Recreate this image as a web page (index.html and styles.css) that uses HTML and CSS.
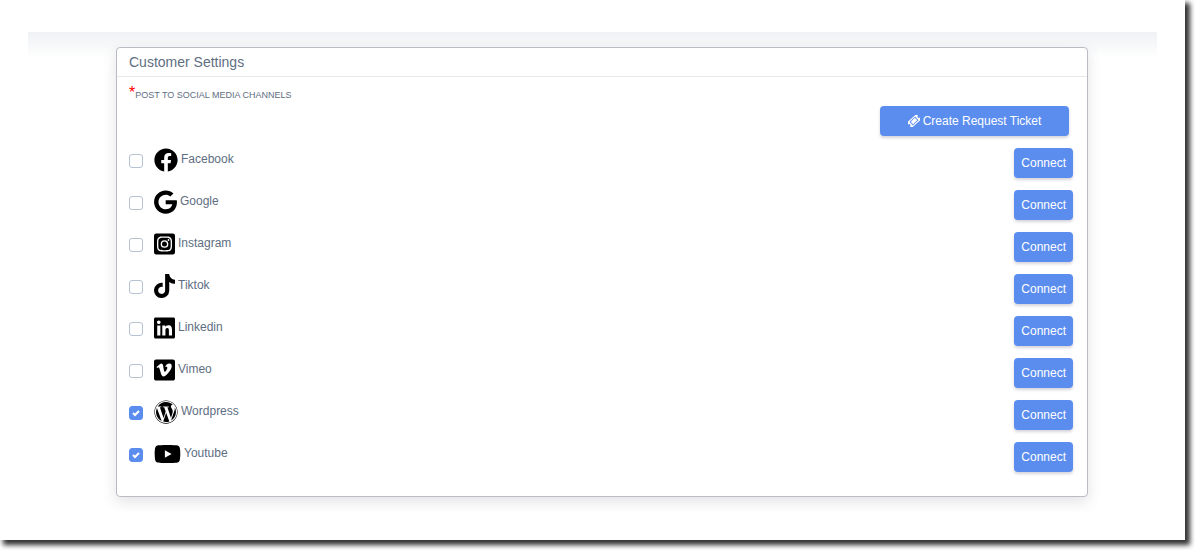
FILE: index.html
```html
<!DOCTYPE html>
<html lang="en">
<head>
    <meta charset="UTF-8">
    <meta name="viewport" content="width=device-width, initial-scale=1.0">
    <title>Customer Settings</title>
    <link rel="stylesheet" href="styles.css">
</head>
<body>
    <main class="sheet">
        <div class="content">
            <form class="card">
                <h1 class="card-header">Customer Settings</h1>
                <div class="card-body">
                    <p class="section-title"><span class="required">*</span>POST TO SOCIAL MEDIA CHANNELS</p>
                    <div class="actions">
                        <button type="button" class="btn btn-ticket">
                            <svg class="ticket-icon" viewBox="0 0 512 512" aria-hidden="true"><g transform="rotate(-42 256 256)"><path fill-rule="evenodd" d="M10 104h492a36 36 0 0 1 36 36v56a60 60 0 0 0 0 120v56a36 36 0 0 1-36 36H10a36 36 0 0 1-36-36v-56a60 60 0 0 0 0-120v-56a36 36 0 0 1 36-36zM92 148v216h328V148zM136 184h240v144H136z"/></g></svg>
                            Create Request Ticket
                        </button>
                    </div>
                    <ul class="channels">
                        <li class="channel">
                            <input type="checkbox" id="facebook">
                            <label for="facebook">
                                <svg class="icon" width="24" height="24" viewBox="0 0 512 512" aria-hidden="true"><path d="M504 256C504 119 393 8 256 8S8 119 8 256c0 123.78 90.69 226.38 209.25 245V327.69h-63V256h63v-54.64c0-62.15 37-96.48 93.67-96.48 27.14 0 55.52 4.84 55.52 4.84v61h-31.28c-30.8 0-40.41 19.12-40.41 38.73V256h68.78l-11 71.69h-57.78V501C413.31 482.38 504 379.78 504 256z"/></svg>
                                <span>Facebook</span>
                            </label>
                            <button type="button" class="btn">Connect</button>
                        </li>
                        <li class="channel">
                            <input type="checkbox" id="google">
                            <label for="google">
                                <svg class="icon" width="23" height="24" viewBox="0 0 488 512" aria-hidden="true"><path d="M488 261.8C488 403.3 391.1 504 248 504 110.8 504 0 393.2 0 256S110.8 8 248 8c66.8 0 123 24.5 166.3 64.9l-67.5 64.9C258.5 52.6 94.3 116.6 94.3 256c0 86.5 69.1 156.6 153.7 156.6 98.2 0 135-70.4 140.8-106.9H248v-85.3h236.1c2.3 12.7 3.9 24.9 3.9 41.4z"/></svg>
                                <span>Google</span>
                            </label>
                            <button type="button" class="btn">Connect</button>
                        </li>
                        <li class="channel">
                            <input type="checkbox" id="instagram">
                            <label for="instagram">
                                <svg class="icon" width="21" height="24" viewBox="0 0 448 512" aria-hidden="true"><path d="M224 202.66A53.34 53.34 0 1 0 277.36 256 53.38 53.38 0 0 0 224 202.66zm124.71-41a54 54 0 0 0-30.41-30.41c-21-8.29-71-6.43-94.3-6.43s-73.25-1.93-94.31 6.43a54 54 0 0 0-30.41 30.41c-8.28 21-6.43 71.05-6.43 94.33s-1.85 73.27 6.47 94.34a54 54 0 0 0 30.41 30.41c21 8.29 71 6.43 94.31 6.43s73.24 1.93 94.3-6.43a54 54 0 0 0 30.41-30.41c8.35-21 6.43-71.05 6.43-94.33s1.92-73.26-6.43-94.33zM224 338a82 82 0 1 1 82-82 81.9 81.9 0 0 1-82 82zm85.38-148.3a19.14 19.14 0 1 1 19.13-19.14 19.1 19.1 0 0 1-19.09 19.18zM400 32H48A48 48 0 0 0 0 80v352a48 48 0 0 0 48 48h352a48 48 0 0 0 48-48V80a48 48 0 0 0-48-48zm-17.12 290c-1.29 25.63-7.14 48.34-25.85 67s-41.4 24.63-67 25.85c-26.41 1.49-105.59 1.49-132 0-25.63-1.29-48.26-7.15-67-25.85s-24.63-41.42-25.85-67c-1.49-26.42-1.49-105.61 0-132 1.29-25.63 7.07-48.34 25.85-67s41.47-24.56 67-25.78c26.41-1.49 105.59-1.49 132 0 25.63 1.29 48.33 7.15 67 25.85s24.63 41.42 25.85 67.05c1.49 26.32 1.49 105.44 0 131.88z"/></svg>
                                <span>Instagram</span>
                            </label>
                            <button type="button" class="btn">Connect</button>
                        </li>
                        <li class="channel">
                            <input type="checkbox" id="tiktok">
                            <label for="tiktok">
                                <svg class="icon" width="21" height="24" viewBox="0 0 448 512" aria-hidden="true"><path d="M448 209.91a210.06 210.06 0 0 1-122.77-39.25v178.72A162.55 162.55 0 1 1 185 188.31v89.89a74.62 74.62 0 1 0 52.23 71.18V0h88a121.18 121.18 0 0 0 1.86 22.17A122.18 122.18 0 0 0 381 102.39a121.43 121.43 0 0 0 67 20.14z"/></svg>
                                <span>Tiktok</span>
                            </label>
                            <button type="button" class="btn">Connect</button>
                        </li>
                        <li class="channel">
                            <input type="checkbox" id="linkedin">
                            <label for="linkedin">
                                <svg class="icon" width="21" height="24" viewBox="0 0 448 512" aria-hidden="true"><path d="M416 32H31.9C14.3 32 0 46.5 0 64.3v383.4C0 465.5 14.3 480 31.9 480H416c17.6 0 32-14.5 32-32.3V64.3c0-17.8-14.4-32.3-32-32.3zM135.4 416H69V202.2h66.5V416zm-33.2-243c-21.3 0-38.5-17.3-38.5-38.5S80.9 96 102.2 96c21.2 0 38.5 17.3 38.5 38.5 0 21.3-17.2 38.5-38.5 38.5zm282.1 243h-66.4V312c0-24.8-.5-56.7-34.5-56.7-34.6 0-39.9 27-39.9 54.9V416h-66.4V202.2h63.7v29.2h.9c8.9-16.8 30.6-34.5 62.9-34.5 67.2 0 79.7 44.3 79.7 101.9V416z"/></svg>
                                <span>Linkedin</span>
                            </label>
                            <button type="button" class="btn">Connect</button>
                        </li>
                        <li class="channel">
                            <input type="checkbox" id="vimeo">
                            <label for="vimeo">
                                <svg class="icon" width="21" height="24" viewBox="0 0 448 512" aria-hidden="true"><path d="M403.2 32H44.8C20.1 32 0 52.1 0 76.8v358.4C0 459.9 20.1 480 44.8 480h358.4c24.7 0 44.8-20.1 44.8-44.8V76.8c0-24.7-20.1-44.8-44.8-44.8zM377 180.8c-1.4 31.5-23.4 74.7-66 129.4-44 57.2-81.3 85.8-111.7 85.8-18.9 0-34.8-17.4-47.9-52.3-25.5-93.3-36.4-148-57.4-148-2.4 0-10.9 5.1-25.4 15.2l-15.2-19.600c37.300-32.800 72.900-69.200 95.200-71.200 25.200-2.400 40.700 14.800 46.500 51.700 20.700 131.200 29.900 151 67.600 91.600 13.500-21.400 20.800-37.700 21.800-48.900 3.500-33.200-25.900-30.900-45.800-22.400 15.900-52.100 46.300-77.400 91.200-76 33.300.9 49 22.500 47.100 64.700z"/></svg>
                                <span>Vimeo</span>
                            </label>
                            <button type="button" class="btn">Connect</button>
                        </li>
                        <li class="channel">
                            <input type="checkbox" id="wordpress" checked>
                            <label for="wordpress">
                                <svg class="icon" width="24" height="24" viewBox="0 0 512 512" aria-hidden="true"><path d="M61.7 169.4l101.500 278C92.200 413 43.300 340.200 43.300 256c0-30.900 6.600-60.100 18.400-86.600zm337.900 75.900c0-26.300-9.400-44.500-17.500-58.700-10.800-17.500-20.900-32.400-20.900-49.900 0-19.600 14.800-37.800 35.700-37.800.9 0 1.800.1 2.800.2-37.900-34.700-88.300-55.900-143.700-55.900-74.300 0-139.700 38.100-177.800 95.900 5 .2 9.700.3 13.700.3 22.200 0 56.700-2.700 56.700-2.700 11.500-.7 12.800 16.200 1.400 17.500 0 0-11.500 1.300-24.300 2l77.500 230.400L249.800 247l-33.100-90.800c-11.500-.7-22.300-2-22.300-2-11.500-.7-10.100-18.200 1.300-17.500 0 0 35.100 2.700 56 2.700 22.200 0 56.700-2.700 56.700-2.700 11.500-.7 12.800 16.200 1.400 17.500 0 0-11.500 1.300-24.300 2l76.900 228.700 21.200-70.900c9-29.400 16-50.500 16-68.700zm-139.900 29.300l-63.800 185.500c19.100 5.600 39.200 8.700 60.100 8.700 24.800 0 48.500-4.300 70.600-12.100-.6-.9-1.100-1.900-1.500-2.900l-65.400-179.200zm183-120.700c.9 6.800 1.400 14 1.400 21.900 0 21.600-4 45.800-16.200 76.200l-65 187.900C426.200 403 468.700 334.500 468.700 256c0-37-9.400-71.800-26-102.100zM504 256c0 136.800-111.300 248-248 248C119.200 504 8 392.700 8 256 8 119.200 119.200 8 256 8c136.700 0 248 111.200 248 248zm-11.400 0c0-130.500-106.200-236.600-236.600-236.600C125.500 19.400 19.400 125.500 19.400 256S125.600 492.600 256 492.600c130.500 0 236.600-106.100 236.600-236.600z"/></svg>
                                <span>Wordpress</span>
                            </label>
                            <button type="button" class="btn">Connect</button>
                        </li>
                        <li class="channel">
                            <input type="checkbox" id="youtube" checked>
                            <label for="youtube">
                                <svg class="icon" width="27" height="24" viewBox="0 0 576 512" aria-hidden="true"><path d="M549.655 124.083c-6.281-23.650-24.787-42.276-48.284-48.597C458.781 64 288 64 288 64S117.220 64 74.629 75.486c-23.497 6.322-42.003 24.947-48.284 48.597-11.412 42.867-11.412 132.305-11.412 132.305s0 89.438 11.412 132.305c6.281 23.650 24.787 41.500 48.284 47.821C117.220 448 288 448 288 448s170.780 0 213.371-11.486c23.497-6.321 42.003-24.171 48.284-47.821 11.412-42.867 11.412-132.305 11.412-132.305s0-89.438-11.412-132.305zm-317.510 213.508V175.185l142.739 81.205-142.739 81.201z"/></svg>
                                <span>Youtube</span>
                            </label>
                            <button type="button" class="btn">Connect</button>
                        </li>
                    </ul>
                </div>
            </form>
        </div>
    </main>
</body>
</html>
```

FILE: styles.css
```css
* {
    box-sizing: border-box;
}
body {
    margin: 0;
    padding: 0 10px 10px 0;
    background-color: #fff;
    color: #5e6e82;
    font-family: "Liberation Sans", Arial, sans-serif;
    font-size: 12px;
    overflow: hidden;
}
.sheet {
    padding: 32px 28px 28px;
    background-color: #fff;
    box-shadow: 4px 4px 5px 1px #333;
}
.content {
    padding: 15px 69px 15px 88px;
    background: linear-gradient(#eff1f4, #fff 26px);
    overflow: hidden;
}
.card {
    background-color: #fff;
    border: 1px solid #b9bcc2;
    border-radius: 4px;
    box-shadow: 0 5px 14px rgba(65, 69, 88, 0.15);
}
.card-header {
    margin: 0;
    padding: 4px 12px;
    border-bottom: 1px solid #e6e8ec;
    font-size: 14px;
    font-weight: normal;
    line-height: 20px;
}
.card-body {
    padding: 9px 14px 12px 12px;
}
.section-title {
    margin: 0;
    font-size: 9px;
    line-height: 16px;
}
.required {
    color: #f00;
    font-size: 16px;
    line-height: 14px;
}
.actions {
    display: flex;
    justify-content: flex-end;
    padding: 3px 4px 12px 0;
}
.btn {
    height: 30px;
    padding: 0 7px;
    background-color: #5b8def;
    border: none;
    border-radius: 4px;
    box-shadow: 0 2px 3px rgba(43, 45, 80, 0.2);
    color: #fff;
    font-family: inherit;
    font-size: 12px;
    cursor: pointer;
}
.btn:hover {
    background-color: #4a7de0;
}
.btn-ticket {
    display: flex;
    align-items: center;
    justify-content: center;
    gap: 3px;
    width: 189px;
}
.ticket-icon {
    width: 12px;
    height: 12px;
    fill: #fff;
}
.channels {
    margin: 0;
    padding: 0;
    list-style: none;
}
.channel {
    display: flex;
    align-items: flex-start;
    padding-bottom: 12px;
}
.channel label {
    display: flex;
    flex: 1;
    gap: 3px;
    line-height: 22px;
}
.channel input {
    appearance: none;
    width: 14px;
    height: 14px;
    margin: 6px 11px 0 0;
    background-color: #fff;
    border: 1px solid #b6c1d2;
    border-radius: 3px;
}
.channel input:checked {
    background: #5b8def url("data:image/svg+xml,%3Csvg xmlns='http://www.w3.org/2000/svg' viewBox='0 0 14 14'%3E%3Cpath d='M4 7l2 2 4-4' fill='none' stroke='%23fff' stroke-width='2'/%3E%3C/svg%3E") center / 14px no-repeat;
    border-color: #5b8def;
}
.icon {
    fill: #000;
}
```
